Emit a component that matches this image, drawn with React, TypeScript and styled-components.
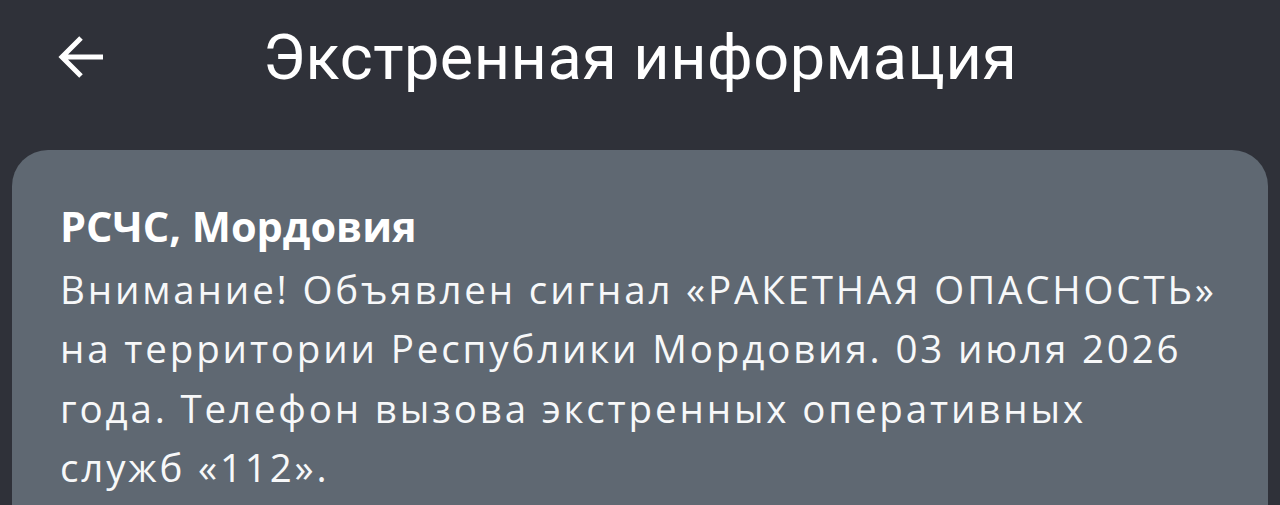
import React from "react";
import styled, { createGlobalStyle } from "styled-components";

const GlobalStyle = createGlobalStyle`
  html, body {
    margin: 0;
    padding: 0;
    background: #2f3139;
    overflow: hidden;
  }
`;

const Screen = styled.div`
  width: 1280px;
  height: 505px;
  background: #2f3139;
  display: flex;
  flex-direction: column;
`;

const TopBar = styled.header`
  display: grid;
  grid-template-columns: 1fr auto 1fr;
  align-items: center;
  height: 150px;
  padding-bottom: 36px;
  box-sizing: border-box;
`;

const BackButton = styled.button`
  justify-self: start;
  margin-left: 54px;
  width: 56px;
  height: 56px;
  padding: 0;
  border: none;
  background: transparent;
  display: flex;
  align-items: center;
  justify-content: center;
  cursor: pointer;
`;

const Title = styled.h1`
  margin: 0;
  font-family: Roboto, "Noto Sans", sans-serif;
  font-weight: 400;
  font-size: 63px;
  line-height: 1;
  color: #ffffff;
  letter-spacing: 0.5px;
`;

const Card = styled.section`
  flex: 1;
  margin: 0 12px;
  background: #5f6872;
  border-radius: 36px 36px 0 0;
  padding: 50px 30px 0 48px;
  color: #ffffff;
  font-family: "Open Sans", "Noto Sans", sans-serif;
`;

const Sender = styled.h2`
  margin: 0 0 8px;
  font-size: 41.5px;
  font-weight: 700;
  line-height: 52px;
`;

const Message = styled.p`
  margin: 0;
  font-size: 38.5px;
  font-weight: 400;
  line-height: 59.3px;
  letter-spacing: 2.85px;
  color: #f7f8f9;
`;

const messageLines = [
  "Внимание! Объявлен сигнал «РАКЕТНАЯ ОПАСНОСТЬ»",
  "на территории Республики Мордовия. 03 июля 2026",
  "года. Телефон вызова экстренных оперативных",
  "служб «112».",
];

function ArrowLeft() {
  return (
    <svg width="50" height="50" viewBox="0 0 50 50" fill="none">
      <path
        d="M46 25H6M24 6L5 25l19 19"
        stroke="#ffffff"
        strokeWidth="5"
        strokeLinecap="butt"
        strokeLinejoin="miter"
      />
    </svg>
  );
}

export default function App() {
  return (
    <Screen>
      <GlobalStyle />
      <TopBar>
        <BackButton aria-label="Назад">
          <ArrowLeft />
        </BackButton>
        <Title>Экстренная информация</Title>
        <span />
      </TopBar>
      <Card>
        <Sender>РСЧС, Мордовия</Sender>
        <Message>
          {messageLines.map((line, i) => (
            <React.Fragment key={i}>
              {line}
              {i < messageLines.length - 1 && <br />}
            </React.Fragment>
          ))}
        </Message>
      </Card>
    </Screen>
  );
}
